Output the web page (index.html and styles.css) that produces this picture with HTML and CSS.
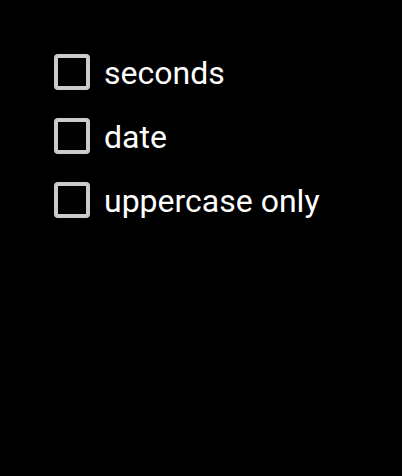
FILE: index.html
```html
<!DOCTYPE html>
<html lang="en">
<head>
<meta charset="utf-8">
<meta name="viewport" content="width=device-width, initial-scale=1">
<title>Options</title>
<link rel="stylesheet" href="styles.css">
</head>
<body>
<main class="options">
  <label class="option"><input class="box" type="checkbox"><span class="text">seconds</span></label>
  <label class="option"><input class="box" type="checkbox"><span class="text">date</span></label>
  <label class="option"><input class="box" type="checkbox"><span class="text">uppercase only</span></label>
</main>
</body>
</html>
```
FILE: styles.css
```css
body {
  margin: 0;
  background: #000;
  color: #fff;
  font-family: Roboto, sans-serif;
  font-size: 32px;
  line-height: 40px;
}

.options {
  display: flex;
  flex-direction: column;
  align-items: flex-start;
  gap: 22px;
  padding: 51px 54px;
}

.option {
  display: flex;
  align-items: center;
  gap: 14px;
}

.text {
  padding-top: 2px;
}

.box {
  appearance: none;
  box-sizing: border-box;
  flex: none;
  width: 36px;
  height: 36px;
  margin: 0;
  border: 4px solid #ccc;
  border-radius: 4px;
}

.box:checked {
  background: #ccc;
}
```
